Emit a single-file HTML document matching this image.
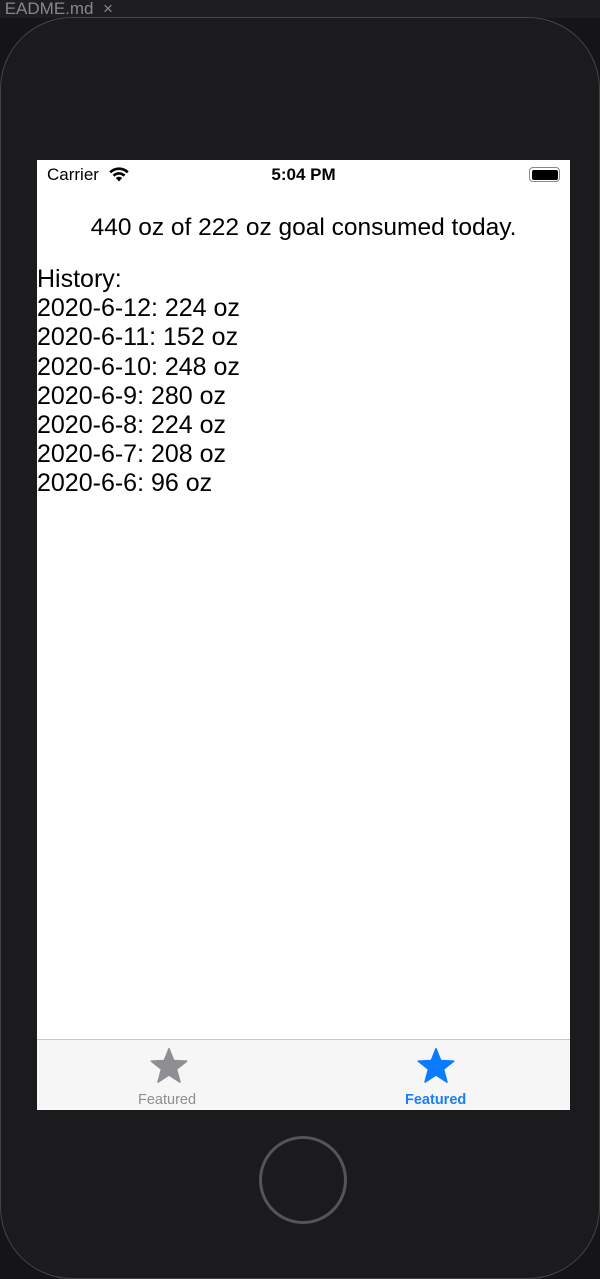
<!DOCTYPE html>
<html><head><style>
body{margin:0;width:600px;height:1243px;background:#151417;position:relative;overflow:hidden;font-family:"Liberation Sans",sans-serif}
.top{position:absolute;left:0;top:0;width:600px;height:18px;background:#1e1d20;color:#888;font-size:17px;line-height:18px}
.phone{position:absolute;left:0;top:17px;width:598px;height:1260px;border:1px solid #444;border-radius:72px;background:#1b1a1d}
.screen{position:absolute;left:37px;top:160px;width:533px;height:949px;background:#fff}
.sb{position:absolute;top:5px;font-size:17px;color:#000}
.title{position:absolute;top:54px;left:0;width:533px;text-align:center;font-size:24.5px}
.hist{position:absolute;top:105px;left:0;font-size:25px;line-height:29.2px}
.tab{position:absolute;left:0;top:879px;width:533px;height:70px;background:#f6f6f7;border-top:1px solid #c8c8c8}
.lbl{position:absolute;top:52px;font-size:14.5px;font-weight:bold}
.home{position:absolute;left:259px;top:1136px;width:82px;height:82px;border:3px solid #555;border-radius:50%}
</style></head><body>
<div class="top">&nbsp;EADME.md &nbsp;×</div>
<div class="phone"></div>
<div class="screen">
<div class="sb" style="left:10px">Carrier</div>
<svg style="position:absolute;left:72px;top:6px" width="20" height="16" viewBox="0 0 20 16"><path d="M10 15.5 L6.8 12 A4.8 4.8 0 0 1 13.2 12 Z M3.6 8.8 A9 9 0 0 1 16.4 8.8 L14.6 10.7 A6.4 6.4 0 0 0 5.4 10.7 Z M0.3 5.4 A13.7 13.7 0 0 1 19.7 5.4 L17.9 7.3 A11 11 0 0 0 2.1 7.3 Z" fill="#000"/></svg>
<div class="sb" style="left:0;width:533px;text-align:center;font-weight:bold">5:04 PM</div>
<div style="position:absolute;left:492px;top:7px;width:29px;height:13px;border:1px solid #888;border-radius:4px"><div style="margin:1.5px;height:10px;background:#000;border-radius:2px"></div></div>
<div class="title">440 oz of 222 oz goal consumed today.</div>
<div class="hist">History:<br>2020-6-12: 224 oz<br>2020-6-11: 152 oz<br>2020-6-10: 248 oz<br>2020-6-9: 280 oz<br>2020-6-8: 224 oz<br>2020-6-7: 208 oz<br>2020-6-6: 96 oz</div>
<div class="tab">
<svg style="position:absolute;left:113px;top:8px" width="38" height="36" viewBox="0 0 24 23"><path d="M12 0.5 L15 8 L23.3 8.4 L16.8 13.6 L19 21.8 L12 17.2 L5 21.8 L7.2 13.6 L0.7 8.4 L9 8Z" fill="#8e8e93" stroke="#8e8e93" stroke-linejoin="round" stroke-width="1"/></svg>
<div class="lbl" style="left:101px;color:#8e8e93;font-weight:normal">Featured</div>
<svg style="position:absolute;left:380px;top:8px" width="38" height="36" viewBox="0 0 24 23"><path d="M12 0.5 L15 8 L23.3 8.4 L16.8 13.6 L19 21.8 L12 17.2 L5 21.8 L7.2 13.6 L0.7 8.4 L9 8Z" fill="#0a7aff" stroke="#0a7aff" stroke-linejoin="round" stroke-width="1"/></svg>
<div class="lbl" style="left:368px;color:#1a7ff0">Featured</div>
</div>
</div>
<div class="home"></div>
</body></html>
